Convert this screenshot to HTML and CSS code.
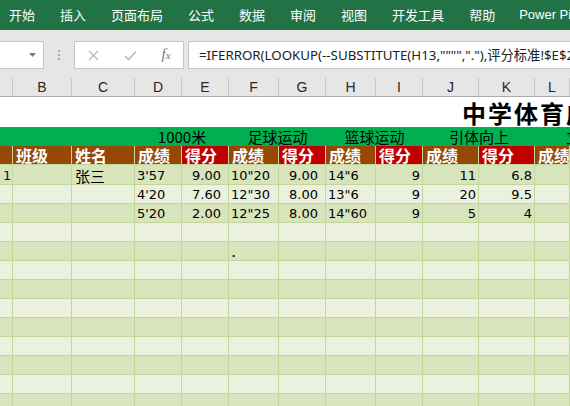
FILE: index.html
```html
<!DOCTYPE html>
<html lang="zh-CN">
<head>
<meta charset="utf-8">
<title>Excel</title>
<link rel="stylesheet" href="styles.css">
</head>
<body>
<div class="app">
  <div class="ribbon">
    <span class="tab">开始</span>
    <span class="tab">插入</span>
    <span class="tab">页面布局</span>
    <span class="tab">公式</span>
    <span class="tab">数据</span>
    <span class="tab">审阅</span>
    <span class="tab">视图</span>
    <span class="tab">开发工具</span>
    <span class="tab">帮助</span>
    <span class="tab latin">Power Pivot</span>
  </div>

  <div class="fbar">
    <div class="namebox">
      <svg class="dd" width="7" height="4" viewBox="0 0 7 4"><path d="M0 0H7L3.5 4Z" fill="#7a7a7a"/></svg>
    </div>
    <div class="grip"><i></i><i></i><i></i></div>
    <div class="fbtns">
      <span class="fb fb-x"><svg width="11" height="11" viewBox="0 0 11 11"><path d="M1 1L10 10M10 1L1 10" stroke="#b9b9b9" stroke-width="1.3" fill="none"/></svg></span>
      <span class="fb fb-ok"><svg width="13" height="11" viewBox="0 0 13 11"><path d="M1 6L4.5 9.5L12 1.5" stroke="#b9b9b9" stroke-width="1.6" fill="none"/></svg></span>
      <span class="fb fb-fx"><span class="fx">f<span class="fx-x">x</span></span></span>
    </div>
    <div class="formula">=IFERROR(LOOKUP(--SUBSTITUTE(H13,"""","."),评分标准!$E$2:$E$22,评分标准!$D$2:$D$22),0)</div>
  </div>

  <div class="sheet">
    <div class="row colhdr">
      <div></div><div>B</div><div>C</div><div>D</div><div>E</div><div>F</div><div>G</div><div>H</div><div>I</div><div>J</div><div>K</div><div>L</div>
    </div>

    <div class="row title">
      <div class="title-text">中学体育成绩评分表</div>
    </div>

    <div class="row band">
      <div class="span3"></div>
      <div class="span2">1000米</div>
      <div class="span2">足球运动</div>
      <div class="span2">篮球运动</div>
      <div class="span2">引体向上</div>
      <div class="cut">立定跳远</div>
    </div>

    <div class="row head">
      <div class="br"></div><div class="br">班级</div><div class="br">姓名</div>
      <div class="br">成绩</div><div class="rd">得分</div>
      <div class="br">成绩</div><div class="rd">得分</div>
      <div class="br">成绩</div><div class="rd">得分</div>
      <div class="br">成绩</div><div class="rd">得分</div>
      <div class="br">成绩</div>
    </div>

    <div class="row data dark first">
      <div class="l a1">1</div><div></div><div class="l cn">张三</div>
      <div class="l">3'57</div><div class="r pad">9.00</div>
      <div class="l">10"20</div><div class="r pad">9.00</div>
      <div class="l">14"6</div><div class="r">9</div>
      <div class="r">11</div><div class="r">6.8</div><div></div>
    </div>
    <div class="row data light">
      <div></div><div></div><div></div>
      <div class="l">4'20</div><div class="r pad">7.60</div>
      <div class="l">12"30</div><div class="r pad">8.00</div>
      <div class="l">13"6</div><div class="r">9</div>
      <div class="r">20</div><div class="r">9.5</div><div></div>
    </div>
    <div class="row data dark">
      <div></div><div></div><div></div>
      <div class="l">5'20</div><div class="r pad">2.00</div>
      <div class="l">12"25</div><div class="r pad">8.00</div>
      <div class="l">14"60</div><div class="r">9</div>
      <div class="r">5</div><div class="r">4</div><div></div>
    </div>
    <div class="row data light"><div></div><div></div><div></div><div></div><div></div><div></div><div></div><div></div><div></div><div></div><div></div><div></div></div>
    <div class="row data dark"><div></div><div></div><div></div><div></div><div></div><div></div><div></div><div></div><div></div><div></div><div></div><div></div></div>
    <div class="row data light"><div></div><div></div><div></div><div></div><div></div><div></div><div></div><div></div><div></div><div></div><div></div><div></div></div>
    <div class="row data dark"><div></div><div></div><div></div><div></div><div></div><div></div><div></div><div></div><div></div><div></div><div></div><div></div></div>
    <div class="row data light"><div></div><div></div><div></div><div></div><div></div><div></div><div></div><div></div><div></div><div></div><div></div><div></div></div>
    <div class="row data dark"><div></div><div></div><div></div><div></div><div></div><div></div><div></div><div></div><div></div><div></div><div></div><div></div></div>
    <div class="row data light"><div></div><div></div><div></div><div></div><div></div><div></div><div></div><div></div><div></div><div></div><div></div><div></div></div>
    <div class="row data dark"><div></div><div></div><div></div><div></div><div></div><div></div><div></div><div></div><div></div><div></div><div></div><div></div></div>
    <div class="row data light"><div></div><div></div><div></div><div></div><div></div><div></div><div></div><div></div><div></div><div></div><div></div><div></div></div>
    <div class="row data dark"><div></div><div></div><div></div><div></div><div></div><div></div><div></div><div></div><div></div><div></div><div></div><div></div></div>

    <span class="cursor-speck"></span>
  </div>
</div>
</body>
</html>
```

FILE: styles.css
```css
* { box-sizing: border-box; margin: 0; padding: 0; }
html, body { width: 570px; height: 406px; overflow: hidden; background: #fff; }
body { font-family: "Noto Sans", "Noto Sans CJK SC", sans-serif; }

.app { width: 570px; height: 406px; overflow: hidden; }

/* ribbon */
.ribbon {
  height: 30px;
  background: #217346;
  display: flex;
  align-items: center;
  gap: 25px;
  padding-left: 9px;
  color: #fff;
  font-size: 13px;
  white-space: nowrap;
  overflow: hidden;
}
.tab { flex: none; line-height: 30px; }
.tab.latin { font-family: "Liberation Sans", sans-serif; font-size: 13px; margin-left: -1px; }

/* formula bar */
.fbar {
  height: 48px;
  background: #e6e6e6;
  display: flex;
  align-items: flex-start;
  padding-top: 11px;
  overflow: hidden;
}
.namebox {
  flex: none;
  width: 44px;
  height: 28px;
  background: #fff;
  border: 1px solid #c6c6c6;
  border-left: none;
  display: flex;
  align-items: center;
  justify-content: flex-end;
  padding-right: 7px;
}
.dd { display: block; margin-top: -1px; }
.grip {
  flex: none;
  width: 30px;
  height: 28px;
  display: flex;
  flex-direction: column;
  align-items: center;
  justify-content: center;
  gap: 2px;
}
.grip i { display: block; width: 2px; height: 2px; background: #a8a8a8; }
.fbtns {
  flex: none;
  width: 110px;
  height: 28px;
  background: #fff;
  border: 1px solid #c6c6c6;
  display: flex;
  align-items: center;
}
.fb { display: flex; align-items: center; justify-content: center; height: 26px; }
.fb svg { display: block; }
.fb-x { width: 37px; }
.fb-ok { width: 37px; }
.fb-fx { width: 34px; }
.fx {
  font-family: "Liberation Serif", serif;
  font-style: italic;
  font-size: 15px;
  color: #777;
  line-height: 1;
  margin-top: -2px;
}
.fx-x { font-size: 11px; }
.formula {
  flex: 1;
  margin-left: 4px;
  height: 28px;
  background: #fff;
  border: 1px solid #c6c6c6;
  border-right: none;
  padding-left: 10px;
  font-size: 13.3px;
  line-height: 26px;
  color: #222;
  white-space: nowrap;
  overflow: hidden;
}

/* sheet */
.sheet { position: relative; }
.row {
  display: grid;
  grid-template-columns: 13px 59px 63px 47px 47px 50px 47px 50px 47px 56px 56px 1fr;
  white-space: nowrap;
}
.row > div { overflow: hidden; }

.colhdr {
  height: 19px;
  background: #e6e6e6;
  border-bottom: 1px solid #ababab;
  font-family: "Liberation Sans", sans-serif;
  font-size: 14px;
  color: #262626;
  line-height: 18px;
}
.colhdr > div { border-right: 1px solid #c8c8c8; text-align: center; }

.title { height: 30px; background: #fff; }
.title-text {
  grid-column: 1 / -1;
  padding-left: 462px;
  font-family: "Noto Sans CJK SC", sans-serif;
  font-weight: 700;
  font-size: 24px;
  letter-spacing: 2px;
  line-height: 30px;
  padding-top: 1px;
  color: #000;
}

.band {
  height: 19px;
  background: #00b050;
  font-family: "Noto Sans CJK SC", sans-serif;
  font-size: 15px;
  line-height: 19px;
  color: #000;
}
.span3 { grid-column: span 3; }
.span2 { grid-column: span 2; text-align: center; }
.cut { padding-left: 31px; }

.head {
  height: 19px;
  font-family: "Noto Sans CJK SC", sans-serif;
  font-weight: 700;
  font-size: 16px;
  line-height: 18px;
  color: #fff;
}
.head > div { border-right: 1px solid #c4d79b; border-bottom: 1px solid #c4d79b; padding-left: 3px; }
.head .br { background: #974706; }
.head .rd { background: #c00000; }

.data {
  height: 19px;
  font-family: "DejaVu Sans", sans-serif;
  font-size: 13px;
  line-height: 19px;
  color: #000;
}
.data.first { height: 20px; line-height: 21px; }
.data > div { border-right: 1px solid #c4d79b; border-bottom: 1px solid #c4d79b; }
.dark { background: #d8e4bc; }
.light { background: #ebf1de; }
.l { padding-left: 2px; }
.r { text-align: right; padding-right: 2px; }
.r.pad { padding-right: 7px; }
.cn { font-family: "Noto Sans CJK SC", sans-serif; font-size: 15px; padding-left: 3px; }
.a1 { padding-left: 3px; color: #101040; }

.cursor-speck {
  position: absolute;
  left: 232px;
  top: 177px;
  width: 3px;
  height: 2px;
  background: linear-gradient(to right, #e8922a 0 1px, #1a1a1a 1px 2px, #2a6fd0 2px 3px);
}
```
